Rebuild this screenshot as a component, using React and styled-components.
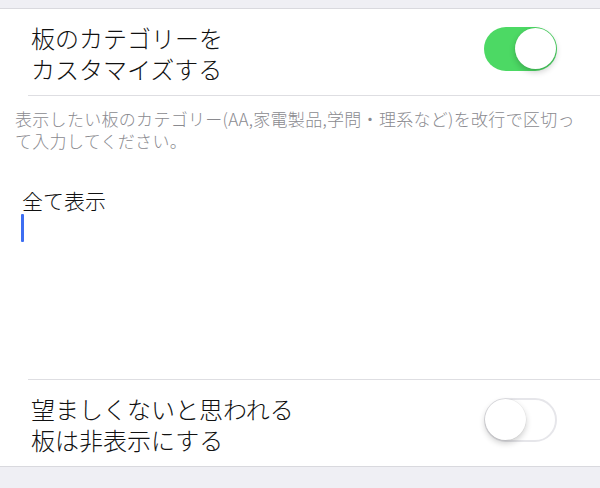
import React from 'react';
import styled, { createGlobalStyle } from 'styled-components';

const GlobalStyle = createGlobalStyle`
  html, body {
    margin: 0;
    padding: 0;
    background: #efeff4;
    font-family: "Noto Sans CJK JP", "Noto Sans", sans-serif;
    -webkit-font-smoothing: antialiased;
  }
`;

const Page = styled.div`
  width: 600px;
  height: 488px;
  padding-top: 8px;
  box-sizing: border-box;
  overflow: hidden;
`;

const Group = styled.div`
  background: #ffffff;
  border-top: 1px solid #d9d9de;
  border-bottom: 1px solid #d9d9de;
  display: flex;
  flex-direction: column;
`;

const Row = styled.div`
  display: flex;
  align-items: center;
  justify-content: space-between;
  height: 86px;
  padding: 0 43px 0 31px;
`;

const Label = styled.div`
  font-size: 24px;
  font-weight: 300;
  line-height: 31px;
  color: #111;
  padding-top: 1px;
`;

const Divider = styled.div`
  height: 1px;
  margin-left: 28px;
  background: #dedee2;
`;

const Note = styled.p`
  margin: 0;
  padding: 12px 15px 0 15px;
  font-size: 17px;
  font-weight: 300;
  letter-spacing: 0.3px;
  line-height: 22px;
  color: #8a8a8f;
`;

const Editor = styled.div`
  height: 227px;
  box-sizing: border-box;
  padding: 34px 22px 0 22px;
  font-size: 21px;
  font-weight: 300;
  line-height: 28px;
  color: #111;
`;

const Caret = styled.span`
  display: block;
  width: 3px;
  height: 28px;
  margin-left: -1px;
  background: #3d6ef2;
  border-radius: 1px;
`;

const Track = styled.div`
  position: relative;
  flex: none;
  width: 73px;
  height: 44px;
  margin-bottom: 7px;
  border-radius: 22px;
  box-sizing: border-box;
  background: ${p => (p.$on ? '#4cd964' : '#ffffff')};
  border: ${p => (p.$on ? 'none' : '2px solid #e6e6ea')};
`;

const Knob = styled.div`
  position: absolute;
  top: ${p => (p.$on ? '1.5px' : '-1px')};
  left: ${p => (p.$on ? '31px' : '-1px')};
  width: 41px;
  height: 41px;
  border-radius: 50%;
  background: #fff;
  box-shadow: 0 3px 6px rgba(0, 0, 0, 0.2), 0 0 0 0.5px rgba(0, 0, 0, 0.06);
`;

function Toggle({ on }) {
  return (
    <Track $on={on}>
      <Knob $on={on} />
    </Track>
  );
}

export default function App() {
  return (
    <Page>
      <GlobalStyle />
      <Group>
        <Row>
          <Label>
            板のカテゴリーを
            <br />
            カスタマイズする
          </Label>
          <Toggle on />
        </Row>
        <Divider />
        <Note>
          表示したい板のカテゴリー(AA,家電製品,学問・理系など)を改行で区切って入力してください。
        </Note>
        <Editor>
          全て表示
          <Caret />
        </Editor>
        <Divider />
        <Row>
          <Label>
            望ましくないと思われる
            <br />
            板は非表示にする
          </Label>
          <Toggle on={false} />
        </Row>
      </Group>
    </Page>
  );
}
